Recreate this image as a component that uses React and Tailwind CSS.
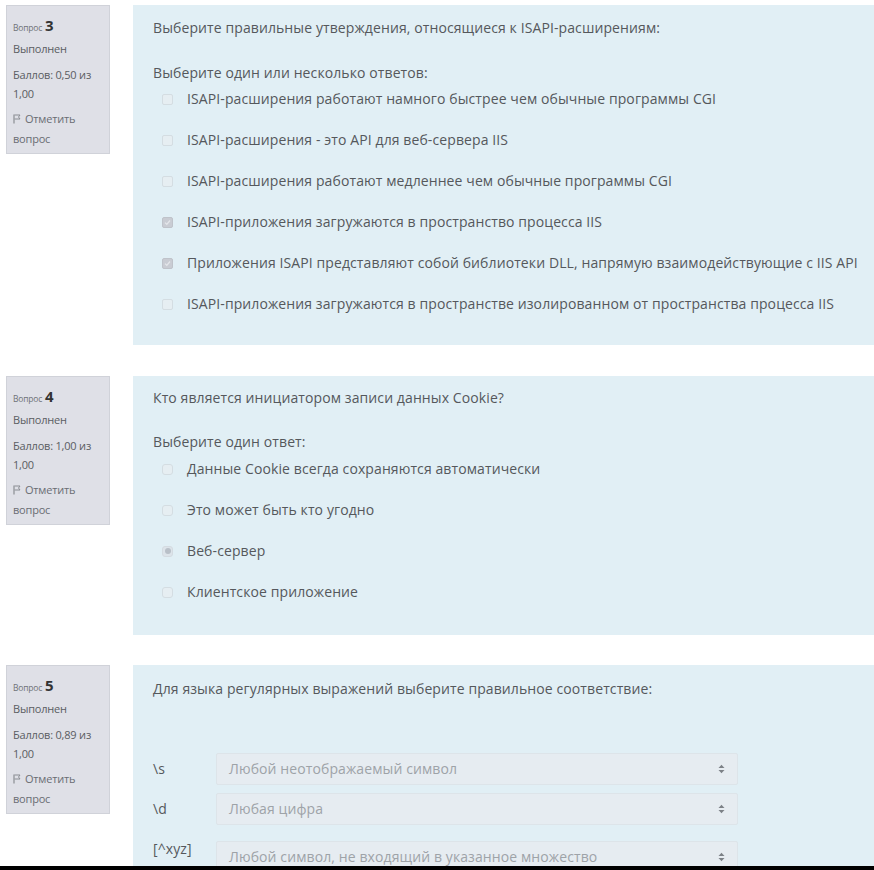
import React from "react";

const font = { fontFamily: '"Open Sans", "Noto Sans", sans-serif' };

function Flag() {
  return (
    <svg width="8" height="10" viewBox="0 0 8 10" className="inline-block mr-[4px] -mt-[2px]">
      <path d="M1 0.5 V9.5" stroke="#8a8d93" strokeWidth="1.2" />
      <path d="M1.5 1 H7 L5.5 3 L7 5 H1.5" fill="none" stroke="#8a8d93" strokeWidth="1" />
    </svg>
  );
}

function InfoBox({ num, score }) {
  return (
    <div className="w-[104px] shrink-0 ml-[6px] self-start bg-[#dfe0e7] border border-[#d0d2d9] px-[6px] pt-[9px] pb-[4px] text-[11px] tracking-[-0.2px] leading-[20px] text-[#5a5d62]">
      <div className="flex items-baseline gap-[3px]">
        <span className="text-[8.5px] text-[#6f7277]">Вопрос</span>
        <span className="text-[15px] font-bold text-[#333]">{num}</span>
      </div>
      <div className="mt-[1px]">Выполнен</div>
      <div className="mt-[6px] leading-[19px]">
        Баллов: {score} из
        <br />
        1,00
      </div>
      <div className="mt-[6px] text-[#6a6d73]">
        <Flag />
        Отметить
        <br />
        вопрос
      </div>
    </div>
  );
}

function Check({ checked }) {
  return (
    <span
      className={`w-[11px] h-[11px] rounded-[2px] border flex items-center justify-center shrink-0 ${
        checked ? "bg-[#c9ccd3] border-[#bfc3ca]" : "bg-[#e6eef2] border-[#d4dde2]"
      }`}
    >
      {checked && (
        <svg width="7" height="7" viewBox="0 0 7 7">
          <path d="M1 3.6 L2.8 5.3 L6 1.5" fill="none" stroke="#e4e6ea" strokeWidth="1.3" />
        </svg>
      )}
    </span>
  );
}

function Radio({ checked }) {
  return (
    <span
      className={`w-[11px] h-[11px] rounded-[3px] border flex items-center justify-center shrink-0 ${
        checked ? "bg-[#dde4ea] border-[#d4dbe1]" : "bg-[#e6eef2] border-[#d4dde2]"
      }`}
    >
      {checked && <span className="w-[6px] h-[6px] rounded-full bg-[#b9c0c8]" />}
    </span>
  );
}

function Option({ text, checked, radio }) {
  return (
    <div className="flex items-center h-[20px] pl-[9px] gap-[14px]">
      {radio ? <Radio checked={checked} /> : <Check checked={checked} />}
      <span>{text}</span>
    </div>
  );
}

function Select({ text }) {
  return (
    <div className="w-[522px] h-[32px] bg-[#e6ecf1] border border-[#dde4e9] rounded-[2px] flex items-center justify-between pl-[12px] pr-[12px] text-[#9ea3a8]">
      <span>{text}</span>
      <svg width="7" height="10" viewBox="0 0 7 10">
        <path d="M0.5 4 L3.5 0.8 L6.5 4 Z" fill="#7c8187" />
        <path d="M0.5 6 L3.5 9.2 L6.5 6 Z" fill="#7c8187" />
      </svg>
    </div>
  );
}

const q3 = [
  ["ISAPI-расширения работают намного быстрее чем обычные программы CGI", false],
  ["ISAPI-расширения - это API для веб-сервера IIS", false],
  ["ISAPI-расширения работают медленнее чем обычные программы CGI", false],
  ["ISAPI-приложения загружаются в пространство процесса IIS", true],
  ["Приложения ISAPI представляют собой библиотеки DLL, напрямую взаимодействующие с IIS API", true],
  ["ISAPI-приложения загружаются в пространстве изолированном от пространства процесса IIS", false],
];

const q4 = [
  ["Данные Cookie всегда сохраняются автоматически", false],
  ["Это может быть кто угодно", false],
  ["Веб-сервер", true],
  ["Клиентское приложение", false],
];

export default function App() {
  return (
    <div className="w-[874px] h-[870px] overflow-hidden bg-white flex flex-col text-[14px] tracking-[0.1px] text-[#55585c]" style={font}>
      <div className="flex-1 overflow-hidden pt-[5px]">
        <div className="flex">
          <InfoBox num="3" score="0,50" />
          <div className="flex-1 ml-[23px] bg-[#e1eff5] pl-[20px] pt-[13px] pb-[31px] leading-[20px]">
            <div>Выберите правильные утверждения, относящиеся к ISAPI-расширениям:</div>
            <div className="mt-[25px]">Выберите один или несколько ответов:</div>
            <div className="mt-[6px] flex flex-col gap-[21px]">
              {q3.map(([t, c]) => (
                <Option key={t} text={t} checked={c} />
              ))}
            </div>
          </div>
        </div>

        <div className="flex mt-[31px]">
          <InfoBox num="4" score="1,00" />
          <div className="flex-1 ml-[23px] bg-[#e1eff5] pl-[20px] pt-[12px] pb-[33px] leading-[20px]">
            <div>Кто является инициатором записи данных Cookie?</div>
            <div className="mt-[24px]">Выберите один ответ:</div>
            <div className="mt-[7px] flex flex-col gap-[21px]">
              {q4.map(([t, c]) => (
                <Option key={t} text={t} checked={c} radio />
              ))}
            </div>
          </div>
        </div>

        <div className="flex mt-[30px]">
          <InfoBox num="5" score="0,89" />
          <div className="flex-1 ml-[23px] bg-[#e1eff5] pl-[20px] pt-[14px] leading-[20px] h-[220px]">
            <div>Для языка регулярных выражений выберите правильное соответствие:</div>
            <div className="mt-[54px] flex items-center">
              <span className="w-[63px]">\s</span>
              <Select text="Любой неотображаемый символ" />
            </div>
            <div className="mt-[8px] flex items-center">
              <span className="w-[63px]">\d</span>
              <Select text="Любая цифра" />
            </div>
            <div className="mt-[16px] flex items-start">
              <span className="w-[63px] -mt-[2px]">[^xyz]</span>
              <Select text="Любой символ, не входящий в указанное множество" />
            </div>
          </div>
        </div>
      </div>
      <div className="h-[4px] bg-black shrink-0" />
    </div>
  );
}
